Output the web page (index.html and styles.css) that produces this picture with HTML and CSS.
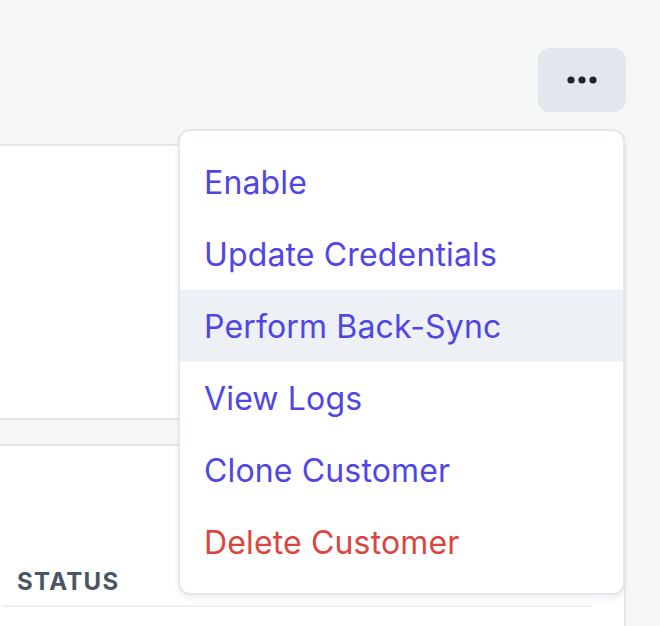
FILE: index.html
```html
<!DOCTYPE html>
<html>
<head>
<meta charset="utf-8">
<link rel="stylesheet" href="styles.css">
</head>
<body>
<div class="page">
  <div class="toolbar">
    <div class="actions">
      <button class="more-btn" aria-label="More actions">
        <svg width="34" height="10" viewBox="0 0 34 10"><circle cx="6" cy="5" r="3.6" fill="#1f2330"/><circle cx="17" cy="5" r="3.6" fill="#1f2330"/><circle cx="28" cy="5" r="3.6" fill="#1f2330"/></svg>
      </button>
      <div class="menu">
        <div class="menu-item">Enable</div>
        <div class="menu-item">Update Credentials</div>
        <div class="menu-item active">Perform Back-Sync</div>
        <div class="menu-item">View Logs</div>
        <div class="menu-item">Clone Customer</div>
        <div class="menu-item danger">Delete Customer</div>
      </div>
    </div>
  </div>
  <div class="card">
    <div class="card-top"></div>
    <div class="card-strip"></div>
    <div class="card-bottom">
      <div class="table-head">
        <span class="th">Status</span>
      </div>
    </div>
  </div>
</div>
</body>
</html>
```

FILE: styles.css
```css
html, body {
  margin: 0;
  padding: 0;
}
body {
  background: #f6f7f7;
  font-family: Inter, "Noto Sans", sans-serif;
  width: 660px;
  height: 626px;
  overflow: hidden;
}
.page {
  padding-top: 48px;
}
.toolbar {
  display: flex;
  justify-content: flex-end;
  padding-right: 34px;
}
.actions {
  position: relative;
}
.more-btn {
  width: 88px;
  height: 64px;
  border: none;
  border-radius: 12px;
  background: #e2e6ed;
  display: flex;
  align-items: center;
  justify-content: center;
  padding: 0;
}
.more-btn svg {
  display: block;
}
.menu {
  position: absolute;
  top: calc(100% + 17px);
  right: 1px;
  width: 443px;
  background: #ffffff;
  border: 2px solid #e3e7ee;
  border-radius: 12px;
  padding: 15px 0;
  box-shadow: 0 4px 6px rgba(15, 23, 42, 0.06);
  z-index: 10;
}
.menu-item {
  height: 72px;
  display: flex;
  align-items: center;
  padding-left: 24px;
  font-size: 32px;
  font-weight: 400;
  letter-spacing: 0.15px;
  color: #4f46e5;
}
.menu-item.active {
  background: #edf0f5;
}
.menu-item.danger {
  color: #d9463f;
}
.card {
  margin-top: 32px;
  margin-left: -20px;
  margin-right: 34px;
  background: #ffffff;
  border: 2px solid #e5e7eb;
}
.card-top {
  height: 272px;
  border-bottom: 2px solid #e5e7eb;
}
.card-strip {
  height: 24px;
  background: #f6f7f7;
  border-bottom: 2px solid #e5e7eb;
}
.card-bottom {
  padding: 0 32px 0 38px;
  height: 200px;
}
.table-head {
  padding-top: 121px;
  padding-bottom: 9px;
  border-bottom: 2px solid #eef0f3;
  margin-left: -18px;
}
.th {
  display: block;
  margin-left: 15px;
  font-size: 24px;
  font-weight: 700;
  letter-spacing: 1.3px;
  text-transform: uppercase;
  color: #4b5563;
}
```
